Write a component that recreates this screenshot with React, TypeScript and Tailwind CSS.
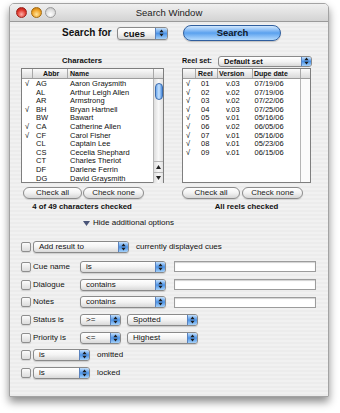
import React from 'react';

const characters = [
  { c: true, a: 'AG', n: 'Aaron Graysmith' },
  { c: false, a: 'AL', n: 'Arthur Leigh Allen' },
  { c: false, a: 'AR', n: 'Armstrong' },
  { c: true, a: 'BH', n: 'Bryan Hartnell' },
  { c: false, a: 'BW', n: 'Bawart' },
  { c: true, a: 'CA', n: 'Catherine Allen' },
  { c: true, a: 'CF', n: 'Carol Fisher' },
  { c: false, a: 'CL', n: 'Captain Lee' },
  { c: false, a: 'CS', n: 'Cecelia Shephard' },
  { c: false, a: 'CT', n: 'Charles Theriot' },
  { c: false, a: 'DF', n: 'Darlene Ferrin' },
  { c: false, a: 'DG', n: 'David Graysmith' },
];

const reels = [
  ['01', 'v.03', '07/19/06'],
  ['02', 'v.02', '07/19/06'],
  ['03', 'v.02', '07/22/06'],
  ['04', 'v.03', '07/25/06'],
  ['05', 'v.01', '05/16/06'],
  ['06', 'v.02', '06/05/06'],
  ['07', 'v.01', '05/16/06'],
  ['08', 'v.01', '05/23/06'],
  ['09', 'v.01', '06/15/06'],
];

const Arrows = () => (
  <svg width="5" height="8" viewBox="0 0 5 8">
    <path d="M2.5 0.6 L4.6 3.2 L0.4 3.2 Z M2.5 7.4 L4.6 4.8 L0.4 4.8 Z" fill="#1c1c1c" />
  </svg>
);

const Popup = ({ text, className = '', big = false }: { text: string; className?: string; big?: boolean }) => (
  <div
    className={`flex shrink-0 overflow-hidden rounded-[3px] border border-[#8a8a8a] bg-gradient-to-b from-white via-[#f3f3f3] to-[#d9d9d9] shadow-[0_1px_1px_rgba(0,0,0,0.15)] ${
      big ? 'h-[13px]' : 'h-[12px]'
    } ${className}`}
  >
    <span
      className={`flex-1 truncate text-[#111] ${
        big ? 'pl-[5px] text-[9.5px] font-bold leading-[11px]' : 'pl-[5px] text-[8px] leading-[10px]'
      }`}
    >
      {text}
    </span>
    <span
      className={`flex items-center justify-center border-l border-[#5a82bd] bg-gradient-to-b from-[#c4e0fb] via-[#4b93e7] to-[#a4d0f8] ${
        big ? 'w-[12px]' : 'w-[10px]'
      }`}
    >
      <Arrows />
    </span>
  </div>
);

const Checkbox = () => (
  <div className="h-[10px] w-[10px] shrink-0 rounded-[2px] border border-[#8e8e8e] bg-gradient-to-b from-[#fbfbfb] to-[#dcdcdc] shadow-[0_1px_1px_rgba(0,0,0,0.12)]" />
);

const TextField = () => (
  <div className="h-[11px] w-[142px] border border-[#9c9c9c] bg-white shadow-[inset_0_1px_1px_rgba(0,0,0,0.18)]" />
);

const PillButton = ({ text, className }: { text: string; className: string }) => (
  <div
    className={`flex h-[12px] items-center justify-center whitespace-nowrap rounded-full border border-[#8c8c8c] bg-gradient-to-b from-white via-[#f2f2f2] to-[#d6d6d6] text-[8px] leading-[10px] text-[#222] shadow-[0_1px_1px_rgba(0,0,0,0.12)] ${className}`}
  >
    {text}
  </div>
);

const Light = ({ className }: { className: string }) => (
  <div className={`h-[11px] w-[11px] rounded-full border ${className}`} />
);

export default function App() {
  return (
    <div className="h-[413px] w-[340px] bg-white pl-[9px] pt-[3px] font-['Liberation_Sans',Arial,sans-serif]">
      <div className="flex h-[394px] w-[320px] flex-col overflow-hidden rounded-t-[5px] border border-[#a3a3a3] bg-[repeating-linear-gradient(0deg,#ececec_0px,#ececec_2px,#f1f1f1_2px,#f1f1f1_4px)] shadow-[0_5px_9px_rgba(0,0,0,0.45)]">
        {/* title bar */}
        <div className="grid h-[18px] grid-cols-[1fr_auto_1fr] items-center border-b border-[#9a9a9a] bg-gradient-to-b from-[#f0f0f0] to-[#d3d3d3]">
          <div className="flex items-center gap-[3.5px] pl-[6px]">
            <Light className="border-[#9b231c] bg-[radial-gradient(circle_at_50%_70%,#ffb0a8_0%,#e03a2e_55%,#a8160f_100%)]" />
            <Light className="border-[#a26a10] bg-[radial-gradient(circle_at_50%_70%,#ffe49a_0%,#f0a429_55%,#b46d0b_100%)]" />
            <Light className="border-[#9a9a9a] bg-[radial-gradient(circle_at_50%_70%,#ffffff_0%,#dcdcdc_60%,#b4b4b4_100%)]" />
          </div>
          <div className="text-[9.5px] leading-[12px] text-[#222]">Search Window</div>
          <div />
        </div>

        {/* search row */}
        <div className="mt-[3px] flex h-[16px] items-center pl-[52px]">
          <span className="whitespace-nowrap text-[10px] font-bold leading-[12px] text-[#111]">Search for</span>
          <Popup text="cues" big className="ml-[6px] w-[51px]" />
          <div className="ml-[15px] flex h-[16px] w-[98px] items-center justify-center rounded-full border border-[#2f5e9e] bg-gradient-to-b from-[#d2e8fd] via-[#5aa1ee] to-[#b3dafd] text-[9.5px] font-bold leading-[12px] text-[#10182a] shadow-[0_1px_1px_rgba(0,0,0,0.2)]">
            Search
          </div>
        </div>

        {/* two lists */}
        <div className="mt-[13px] flex gap-[18px] pl-[11px]">
          {/* characters */}
          <div className="flex w-[143px] flex-col">
            <div className="flex h-[14px] w-[122px] items-center justify-center text-[7.7px] font-bold text-[#111]">Characters</div>
            <div className="flex h-[115px] flex-col border border-[#7e7e7e] bg-white">
              <div className="flex h-[10px] border-b border-[#9c9c9c] bg-gradient-to-b from-[#fbfbfb] to-[#dadada] text-[7px] font-bold leading-[9px] text-[#111]">
                <div className="w-[11px] border-r border-[#a8a8a8]" />
                <div className="w-[35px] border-r border-[#a8a8a8] pl-[10px]">Abbr</div>
                <div className="w-[86px] border-r border-[#a8a8a8] pl-[2px]">Name</div>
                <div className="flex-1" />
              </div>
              <div className="flex flex-1">
                <div className="flex-1 pt-px">
                  {characters.map((r) => (
                    <div key={r.a} className="flex h-[8.6px] whitespace-nowrap text-[7.5px] leading-[8.6px] text-[#111]">
                      <div className="w-[11px] pl-[3px]">{r.c ? '√' : ''}</div>
                      <div className="w-[35px] pl-[3px]">{r.a}</div>
                      <div className="pl-[2px]">{r.n}</div>
                    </div>
                  ))}
                </div>
                <div className="flex w-[10px] flex-col border-l border-[#b5b5b5] bg-gradient-to-r from-[#dedede] via-[#f8f8f8] to-[#e2e2e2]">
                  <div className="mx-auto mt-[4px] h-[17px] w-[8px] rounded-full border border-[#3c6cae] bg-gradient-to-r from-[#6ea9ee] via-[#c6e2fd] to-[#4a8de0]" />
                  <div className="flex-1" />
                  <div className="flex h-[11px] items-center justify-center border-t border-[#b5b5b5]">
                    <svg width="5" height="4" viewBox="0 0 5 4">
                      <path d="M2.5 0 L5 4 L0 4 Z" fill="#222" />
                    </svg>
                  </div>
                  <div className="flex h-[11px] items-center justify-center border-t border-[#b5b5b5]">
                    <svg width="5" height="4" viewBox="0 0 5 4">
                      <path d="M0 0 L5 0 L2.5 4 Z" fill="#222" />
                    </svg>
                  </div>
                </div>
              </div>
            </div>
            <div className="mt-[4px] flex gap-[1px] pl-[2px]">
              <PillButton text="Check all" className="w-[59px]" />
              <PillButton text="Check none" className="w-[61px]" />
            </div>
            <div className="mt-[2px] flex h-[12px] w-[122px] items-center justify-center whitespace-nowrap text-[7.8px] font-bold text-[#111]">
              4 of 49 characters checked
            </div>
          </div>

          {/* reels */}
          <div className="flex w-[129px] flex-col">
            <div className="flex h-[14px] items-center">
              <span className="shrink-0 whitespace-nowrap text-[7.2px] font-bold text-[#111]">Reel set:</span>
              <div className="ml-[6px] flex h-[11px] w-[94px] shrink-0 overflow-hidden rounded-[3px] border border-[#8a8a8a] bg-gradient-to-b from-white via-[#f3f3f3] to-[#d9d9d9]">
                <span className="flex-1 whitespace-nowrap pl-[5px] text-[7.6px] font-bold leading-[9px] text-[#111]">Default set</span>
                <span className="flex w-[10px] items-center justify-center border-l border-[#5a82bd] bg-gradient-to-b from-[#c4e0fb] via-[#4b93e7] to-[#a4d0f8]">
                  <Arrows />
                </span>
              </div>
            </div>
            <div className="flex h-[115px] flex-col border border-[#7e7e7e] bg-white">
              <div className="flex h-[10px] whitespace-nowrap border-b border-[#9c9c9c] bg-gradient-to-b from-[#fbfbfb] to-[#dadada] text-[7px] font-bold leading-[9px] text-[#111]">
                <div className="w-[13px] border-r border-[#a8a8a8]" />
                <div className="w-[22px] border-r border-[#a8a8a8] pl-[2px]">Reel</div>
                <div className="w-[35px] border-r border-[#a8a8a8] pl-[1px]">Version</div>
                <div className="w-[48px] border-r border-[#a8a8a8] pl-[1px]">Dupe date</div>
                <div className="flex-1" />
              </div>
              <div className="flex flex-1">
                <div className="flex-1 pt-px">
                  {reels.map((r) => (
                    <div key={r[0]} className="flex h-[8.6px] whitespace-nowrap text-[7.5px] leading-[8.6px] text-[#111]">
                      <div className="w-[13px] pl-[3px]">√</div>
                      <div className="w-[22px] pl-[5px]">{r[0]}</div>
                      <div className="w-[35px] pl-[8px]">{r[1]}</div>
                      <div className="pl-[1.5px]">{r[2]}</div>
                    </div>
                  ))}
                </div>
                <div className="w-[10px] border-l border-[#b5b5b5] bg-[#fbfbfb]" />
              </div>
            </div>
            <div className="mt-[4px] flex gap-[2px]">
              <PillButton text="Check all" className="w-[58px]" />
              <PillButton text="Check none" className="w-[61px]" />
            </div>
            <div className="mt-[2px] flex h-[12px] items-center justify-center whitespace-nowrap text-[7.8px] font-bold text-[#111]">
              All reels checked
            </div>
          </div>
        </div>

        {/* disclosure */}
        <div className="mt-[4px] flex h-[12px] items-center pl-[73px]">
          <svg width="7" height="5" viewBox="0 0 7 5">
            <path d="M0 0 L7 0 L3.5 5 Z" fill="#4a5578" />
          </svg>
          <span className="ml-[3px] whitespace-nowrap text-[8px] leading-[10px] text-[#111]">Hide additional options</span>
        </div>

        {/* options */}
        <div className="mt-[11px] flex flex-col gap-[3.7px] whitespace-nowrap pl-[11px] text-[8px] leading-[10px] text-[#111]">
          <div className="mb-[2.3px] flex h-[14px] items-center">
            <Checkbox />
            <Popup text="Add result to" className="ml-[2px] w-[96px]" />
            <span className="ml-[7px]">currently displayed cues</span>
          </div>
          <div className="flex h-[14px] items-center">
            <Checkbox />
            <span className="ml-[2px] w-[47px]">Cue name</span>
            <Popup text="is" className="w-[86px]" />
            <div className="ml-[8px]">
              <TextField />
            </div>
          </div>
          <div className="flex h-[14px] items-center">
            <Checkbox />
            <span className="ml-[2px] w-[47px]">Dialogue</span>
            <Popup text="contains" className="w-[86px]" />
            <div className="ml-[8px]">
              <TextField />
            </div>
          </div>
          <div className="flex h-[14px] items-center">
            <Checkbox />
            <span className="ml-[2px] w-[47px]">Notes</span>
            <Popup text="contains" className="w-[86px]" />
            <div className="ml-[8px]">
              <TextField />
            </div>
          </div>
          <div className="flex h-[14px] items-center">
            <Checkbox />
            <span className="ml-[2px] w-[47px]">Status is</span>
            <Popup text=">=" className="w-[41px]" />
            <Popup text="Spotted" className="ml-[6px] w-[71px]" />
          </div>
          <div className="flex h-[14px] items-center">
            <Checkbox />
            <span className="ml-[2px] w-[47px]">Priority is</span>
            <Popup text="<=" className="w-[41px]" />
            <Popup text="Highest" className="ml-[6px] w-[71px]" />
          </div>
          <div className="flex h-[14px] items-center">
            <Checkbox />
            <Popup text="is" className="ml-[2px] w-[57px]" />
            <span className="ml-[7px]">omitted</span>
          </div>
          <div className="flex h-[14px] items-center">
            <Checkbox />
            <Popup text="is" className="ml-[2px] w-[57px]" />
            <span className="ml-[7px]">locked</span>
          </div>
        </div>
      </div>
    </div>
  );
}
